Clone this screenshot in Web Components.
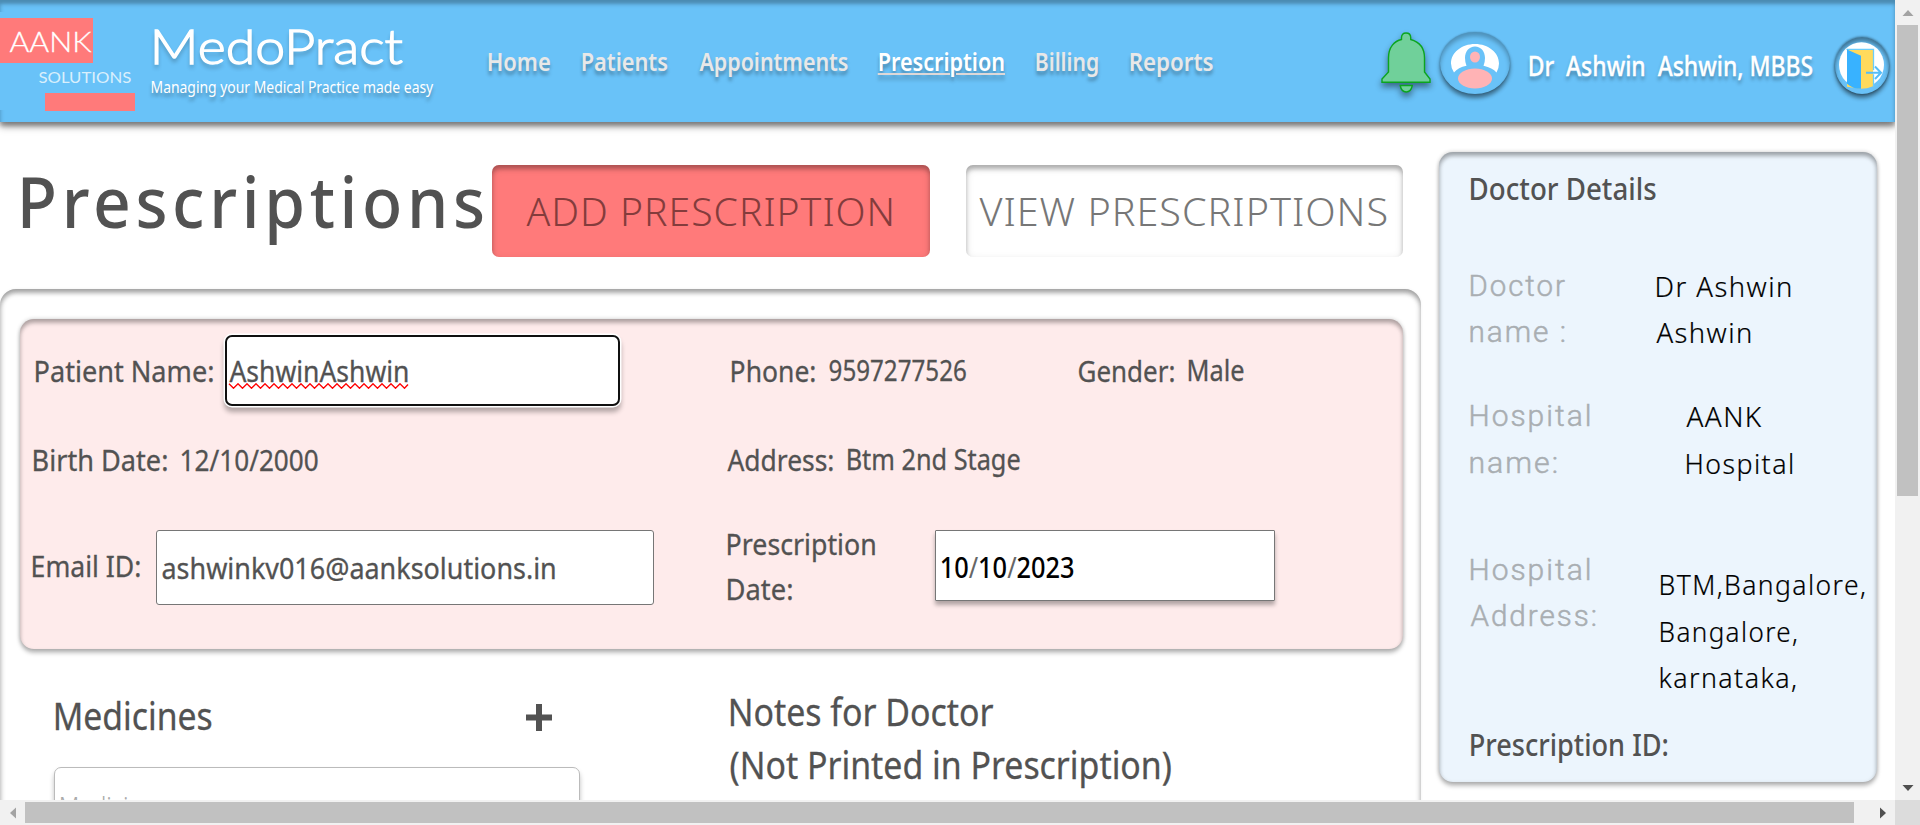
<!DOCTYPE html>
<html lang="en">
<head>
<meta charset="utf-8">
<title>MedoPract</title>
<style>
html,body{margin:0;height:100%;overflow:hidden;background:#fff}
body{font-family:"Noto Sans","Open Sans",sans-serif;color:#525252}
</style>
</head>
<body>
<medo-app></medo-app>
<script>
// Single line of text whose ink is fitted to a given width.
class FitText extends HTMLElement{
  connectedCallback(){
    if(this.shadowRoot)return;
    const r=this.attachShadow({mode:'open'});
    const fs=+this.getAttribute('size'),w=+this.getAttribute('w'),ls=+(this.getAttribute('ls')||0);
    r.innerHTML=`<style>:host{display:block;flex:none;width:${w}px;height:${fs}px;font-size:${fs}px;line-height:1;letter-spacing:${ls}px;white-space:pre}
    span{display:inline-block;line-height:1;vertical-align:top;transform-origin:0 0;text-decoration:inherit}</style><span><slot></slot></span>`;
    const c=getComputedStyle(this),x=FitText.ctx;
    x.font=`${c.fontWeight} ${fs}px ${c.fontFamily}`;x.letterSpacing=ls+'px';
    const m=x.measureText(this.textContent),ink=m.actualBoundingBoxRight+m.actualBoundingBoxLeft,s=(w-1.7)/ink;
    r.querySelector('span').style.transform=`translateX(${m.actualBoundingBoxLeft*s+.4}px) scaleX(${s})`;
  }
}
FitText.ctx=document.createElement('canvas').getContext('2d');
customElements.define('fit-text',FitText);

const define=(name,html)=>customElements.define(name,class extends HTMLElement{
  connectedCallback(){
    if(this.shadowRoot)return;
    const t=document.createElement('template');t.innerHTML=html;
    this.attachShadow({mode:'open'}).append(document.importNode(t.content,true));
  }
});

define('medo-logo',`<style>
:host{display:block;width:135px;height:98px;background:#69c2f8;font-family:Lato,sans-serif;color:#fff;font-weight:300;padding-top:6px;box-sizing:border-box}
.a{width:93px;height:45px;background:#ff7a7a;padding:9px 0 0 9px;box-sizing:border-box}
.a fit-text{-webkit-text-stroke:.3px #fff}
.s{padding:6px 0 0 38px;color:#d9effc;font-weight:400}
.b{width:90px;height:18px;background:#ff7a7a;margin:8px 0 0 45px}
</style><div class="a"><fit-text size="28" w="84">AANK</fit-text></div><div class="s"><fit-text size="16" w="94">SOLUTIONS</fit-text></div><div class="b"></div>`);

define('icon-bell',`<style>:host{display:block;width:50px;height:62px;filter:drop-shadow(0 4px 3px rgba(0,0,0,.45))}svg{display:block}</style>
<svg width="50" height="62" viewBox="0 0 50 62"><g fill="#70d09a" stroke="#0ba51e" stroke-width="1.4"><path d="M19.2 53.5H31.300Q30 60 25.200 60Q20.500 60 19.200 53.500Z"/><path d="M1 50.300V47L7.500 40V26C7.500 15 13.500 9 20.500 7.500V5.500Q20.500 1 25 1Q29.700 1 29.700 5.500V7.500C37 9.500 43.500 15 43.500 26V40L49 47V50.300Z"/></g></svg>`);

define('icon-user',`<style>:host{display:block;width:70px;height:62px;border-radius:50%;background:#69c2f8;box-shadow:0 4px 4px rgba(0,0,0,.45),0 0 2px rgba(0,0,0,.3),inset 0 4px 4px rgba(0,0,0,.25)}svg{display:block}</style>
<svg width="70" height="62" viewBox="0 0 70 60"><path fill="#fff" d="M11 30.500C11 19.500 21.600 11 35 11S59 19.500 59 30.500Q59 35 56.500 39.500Q52.500 34.800 43.500 32.700Q45 29 45 25C45 18.500 41 13.500 35 13.500S25 18.500 25 25Q25 29 26.500 32.700Q18 34.500 14 39.500Q11 35 11 30.500Z"/><ellipse cx="35" cy="24" rx="5" ry="5.500" fill="#ffb3b5"/><ellipse cx="35" cy="45.500" rx="17" ry="10" fill="#ffb3b5"/></svg>`);

define('icon-exit',`<style>:host{display:block;width:54px;height:57px;border-radius:50%;background:#69c2f8;box-shadow:0 4px 4px rgba(0,0,0,.45),0 0 2px 1px rgba(0,0,0,.25),inset 0 4px 4px rgba(0,0,0,.4)}svg{display:block}</style>
<svg width="54" height="57" viewBox="0 0 54 55" preserveAspectRatio="none"><ellipse cx="26.500" cy="27" rx="22.500" ry="22" fill="#fff"/><path d="M12 12H38V47.500Q32 50 26 50L12 48Z" fill="#ffda5c"/><path d="M11.500 12H38.500V32M38.500 36V48" fill="none" stroke="#6bcdfb" stroke-width="1.300"/><path d="M12 12L26 18V50Q18 50 12 45Z" fill="#38b2ff"/><path d="M31 34.500H46M40 28.500L46 34.500L40 40.500" fill="none" stroke="#55bdf7" stroke-width="2"/></svg>`);

define('app-header',`<style>
:host{display:flex;height:122px;background:#69c2f8;color:#fff;align-items:flex-start;position:relative;
box-shadow:inset 0 4px 4px rgba(0,0,0,.25),inset 0 4px 2px rgba(0,0,0,.05),0 4px 4px rgba(0,0,0,.25),0 4px 8px rgba(0,0,0,.4)}
medo-logo{margin-top:12px}
fit-text{text-shadow:0 4px 4px rgba(0,0,0,.3)}
.brand{display:flex;flex-direction:column;margin-left:16px;width:283px}
.brand fit-text:first-child{margin:23px 0 0 3px;font-family:Lato,sans-serif;font-weight:300;-webkit-text-stroke:1.300px #fff}
nav{display:flex;gap:30.500px;margin:48px 0 0 54px;color:#e8e8e8;font-weight:600}
.u{color:#fff;text-decoration:underline #ded8d8 2px;text-underline-offset:2px}
.me{display:flex;margin-left:auto;padding-right:6.500px;font-weight:500}
</style>
<medo-logo></medo-logo>
<div class="brand"><fit-text size="47" w="250">MedoPract</fit-text><fit-text size="16.500" w="284" style="margin-top:9px">Managing your Medical Practice made easy</fit-text></div>
<nav><fit-text size="26" w="63">Home</fit-text><fit-text size="26" w="86.500">Patients</fit-text><fit-text size="26" w="150">Appointments</fit-text><fit-text class="u" size="26" w="126">Prescription</fit-text><fit-text size="26" w="63.500">Billing</fit-text><fit-text size="26" w="84">Reports</fit-text></nav>
<div class="me"><icon-bell style="margin-top:32px"></icon-bell><icon-user style="margin:32px 0 0 9px"></icon-user><fit-text size="26.500" w="285" style="margin:52.500px 0 0 19px;-webkit-text-stroke:.3px #fff">Dr  Ashwin  Ashwin, MBBS</fit-text><icon-exit style="margin:37px 0 0 21px"></icon-exit></div>`);

define('tab-button',`<style>
:host{display:flex;flex:none;justify-content:center;width:437.500px;height:92px;border-radius:7px;box-sizing:border-box;padding:26px 3px 0 0;font-weight:300;color:#777;
box-shadow:inset 0 4px 4px rgba(0,0,0,.25),inset 0 3px 8px rgba(0,0,0,.12)}
:host([active]){background:#ff7a7a;color:#843c3c}
</style><slot></slot>`);

define('text-box',`<style>
:host{display:block;flex:none;box-sizing:border-box;background:#fff;border:1px solid #767676;border-radius:3px;position:relative}
:host([focused]){border:2.500px solid #101010;border-radius:7px;box-shadow:0 0 0 1.500px #fff,0 5px 5px 1px rgba(0,0,0,.3)}
:host([raised]){border-radius:1px;box-shadow:0 4px 4px rgba(0,0,0,.3)}
</style><slot></slot>`);

define('patient-card',`<style>
:host{display:block;margin:30px 18px 0 20px;height:330px;border-radius:14px;background:#feebeb;box-sizing:border-box;
box-shadow:inset 0 4px 4px rgba(0,0,0,.25),inset 0 2px 4px rgba(0,0,0,.1),0 4px 4px rgba(0,0,0,.25),0 0 4px rgba(0,0,0,.2)}
.r{display:grid;grid-template-columns:707px 1fr;-webkit-text-stroke:.3px #525252}
.c{display:flex;align-items:flex-start}
svg{display:block;margin:-2px 0 0}
i{font-style:normal;color:#666;font-weight:400}
</style>
<div class="r" style="height:108px">
 <div class="c"><fit-text size="29.500" w="179" style="margin:37px 0 0 14.500px">Patient Name:</fit-text><text-box focused style="width:394.500px;height:71px;margin:16px 0 0 11.500px"><fit-text size="29" w="180" style="margin:19px 0 0 1.500px">AshwinAshwin</fit-text><svg width="184" height="6" viewBox="0 0 184 6"><path fill="none" stroke="red" stroke-width="1.400" d="M2 .8L6.500 5.200L11 .8L15.500 5.200L20 .8L24.500 5.200L29 .8L33.500 5.200L38 .8L42.500 5.200L47 .8L51.500 5.200L56 .8L60.500 5.200L65 .8L69.500 5.200L74 .8L78.500 5.200L83 .8L87.500 5.200L92 .8L96.500 5.200L101 .8L105.500 5.200L110 .8L114.500 5.200L119 .8L123.500 5.200L128 .8L132.500 5.200L137 .8L141.500 5.200L146 .8L150.500 5.200L155 .8L159.500 5.200L164 .8L168.500 5.200L173 .8L177.500 5.200L181 1.500"/></svg></text-box></div>
 <div class="c" style="padding:37px 0 0 3.500px"><fit-text size="29.500" w="85">Phone:</fit-text><fit-text size="28.500" w="138" style="margin-left:13px">9597277526</fit-text><fit-text size="29.500" w="97" style="margin-left:111px">Gender:</fit-text><fit-text size="28.500" w="57" style="margin-left:13.500px">Male</fit-text></div>
</div>
<div class="r" style="height:103px">
 <div class="c" style="padding:18px 0 0 12.500px"><fit-text size="29.500" w="135">Birth Date:</fit-text><fit-text size="29" w="138.500" style="margin-left:13.500px">12/10/2000</fit-text></div>
 <div class="c" style="padding:18px 0 0 0"><fit-text size="29.500" w="107">Address:</fit-text><fit-text size="28.500" w="174" style="margin-left:13px">Btm 2nd Stage</fit-text></div>
</div>
<div class="r">
 <div class="c"><fit-text size="29.500" w="109" style="margin:21px 0 0 12px">Email ID:</fit-text><text-box style="width:498px;height:75px;margin-left:15px"><fit-text size="29.500" w="394" style="margin:22px 0 0 5px">ashwinkv016@aanksolutions.in</fit-text></text-box></div>
 <div class="c"><div style="width:208px"><fit-text size="29.500" w="149" style="margin-top:-1px">Prescription</fit-text><fit-text size="29.500" w="66" style="margin-top:15.500px">Date:</fit-text></div><text-box raised style="width:340px;height:71px"><fit-text size="29" w="135" style="margin:21px 0 0 5px;font-weight:500;color:#000;-webkit-text-stroke:0">10<i>/</i>10<i>/</i>2023</fit-text></text-box></div>
</div>`);

define('doctor-panel',`<style>
:host{display:block;position:relative;width:438px;height:630px;box-sizing:border-box;padding-left:31px;border-radius:14px;background:#ecf5fd;
box-shadow:inset 0 4px 4px rgba(0,0,0,.25),inset 0 2px 5px rgba(0,0,0,.15),0 4px 4px rgba(0,0,0,.25),0 0 4px rgba(0,0,0,.2)}
.h{font-weight:500}
.r{display:flex}.k{font-family:Roboto,sans-serif;color:#a9aeb2;font-weight:300;-webkit-text-stroke:.5px #a9aeb2}.v{color:#000;font-weight:300;-webkit-text-stroke:.2px #000}
.k fit-text+fit-text{margin-top:16px}.v fit-text+fit-text{margin-top:18px}
</style>
<fit-text class="h" size="31" w="187" style="padding-top:20.500px">Doctor Details</fit-text>
<div class="r" style="margin-top:67px;height:130.500px"><div class="k" style="width:186px"><fit-text size="30" ls="2" w="96">Doctor</fit-text><fit-text size="30" ls="2" w="96">name :</fit-text></div><div class="v" style="padding-top:1.500px"><fit-text size="28" ls="1.500" w="136">Dr Ashwin</fit-text><fit-text size="28" ls="1.500" w="96">Ashwin</fit-text></div></div>
<div class="r" style="height:154px"><div class="k" style="width:216px"><fit-text size="30" ls="2" w="121">Hospital</fit-text><fit-text size="30" ls="2" w="88" style="margin-top:17px">name:</fit-text></div><div class="v" style="padding-top:1px"><fit-text size="28" ls="1.500" w="77">AANK</fit-text><fit-text size="28" ls="1.500" w="108" style="margin-top:19px">Hospital</fit-text></div></div>
<div class="r" style="height:173.500px"><div class="k" style="width:190px"><fit-text size="30" ls="2" w="121">Hospital</fit-text><fit-text size="30" ls="2" w="127">Address:</fit-text></div><div class="v" style="padding-top:15px"><fit-text size="28" ls="1.500" w="206">BTM,Bangalore,</fit-text><fit-text size="28" ls="1.500" w="138" style="margin-top:19px">Bangalore,</fit-text><fit-text size="28" ls="1.500" w="137">karnataka,</fit-text></div></div>
<fit-text class="h" size="31" w="199">Prescription ID:</fit-text>`);

define('scroll-bar',`<style>
:host{display:flex;background:#f1f1f1;box-sizing:border-box;padding:0 2px;flex-direction:column;align-items:center}
:host([h]){flex-direction:row;padding:2px 0}
.s{width:25px;height:25px;flex:none;display:flex;align-items:center;justify-content:center}
:host([h]) .s{height:21px}
.t{background:#c1c1c1;width:21px;height:471px}
:host([h]) .t{width:1829px;height:21px}
.t+.s{margin-top:auto}:host([h]) .t+.s{margin:0 0 0 auto}
svg{width:12px;height:12px}
:host([h]) svg{transform:rotate(-90deg)}
</style><div class="s"><svg viewBox="0 0 12 12"><path d="M6 3L11.500 9H.5Z" fill="#a3a3a3"/></svg></div><div class="t"></div><div class="s"><svg viewBox="0 0 12 12"><path d="M.5 3H11.500L6 9Z" fill="#505050"/></svg></div>`);

define('medo-app',`<style>
:host{display:grid;grid-template:800px 25px/1895px 25px;width:1920px;height:825px;overflow:hidden}
.view{overflow:hidden;background:#fff}
.body{display:grid;grid-template-columns:1421px 438px;column-gap:18px}
.top{display:flex;height:167px;box-sizing:border-box}
.panel{display:flow-root;height:640px;border-radius:16px 16px 0 0;box-shadow:inset 0 4px 4px rgba(0,0,0,.25),inset 0 2px 6px rgba(0,0,0,.2),0 0 3px rgba(0,0,0,.06)}
.low{display:grid;grid-template-columns:675px 1fr;padding-left:54.500px;-webkit-text-stroke:.3px #525252}
.mh{display:flex}
.corner{background:#dcdcdc}
</style>
<div class="view"><app-header></app-header>
<div class="body">
 <main>
  <div class="top"><fit-text size="71" ls="5" w="462" style="font-weight:500;margin:43px 0 0 21.500px">Prescriptions</fit-text>
   <tab-button active style="margin:43px 0 0 8.500px"><fit-text size="39" ls="1" w="367">ADD PRESCRIPTION</fit-text></tab-button>
   <tab-button style="margin:43px 0 0 36.500px;width:437px"><fit-text size="39" ls="1" w="409">VIEW PRESCRIPTIONS</fit-text></tab-button></div>
  <section class="panel"><patient-card></patient-card>
   <div class="low">
    <div><div class="mh"><fit-text size="38" w="158" style="margin-top:47px">Medicines</fit-text><svg width="26" height="27" viewBox="0 0 26 27" style="margin:55px 0 0 313px"><path d="M13 0V27M0 13.500H26" stroke="#525252" stroke-width="6"/></svg></div>
     <text-box style="width:526.500px;height:75px;margin:33px 0 0 -1px;border-color:#bbb;border-radius:7px;box-shadow:0 4px 5px rgba(0,0,0,.25)"><fit-text size="29" w="96" style="margin:24px 0 0 5px;font-weight:300;color:#aaa;-webkit-text-stroke:0">Medicine</fit-text></text-box></div>
    <div><fit-text size="38" w="265" style="margin-top:43px">Notes for Doctor</fit-text><fit-text size="38" w="442" style="margin-top:15px">(Not Printed in Prescription)</fit-text></div>
   </div></section>
 </main>
 <doctor-panel style="margin-top:30px"></doctor-panel>
</div></div>
<scroll-bar></scroll-bar><scroll-bar h></scroll-bar><div class="corner"></div>`);
</script>
</body>
</html>
